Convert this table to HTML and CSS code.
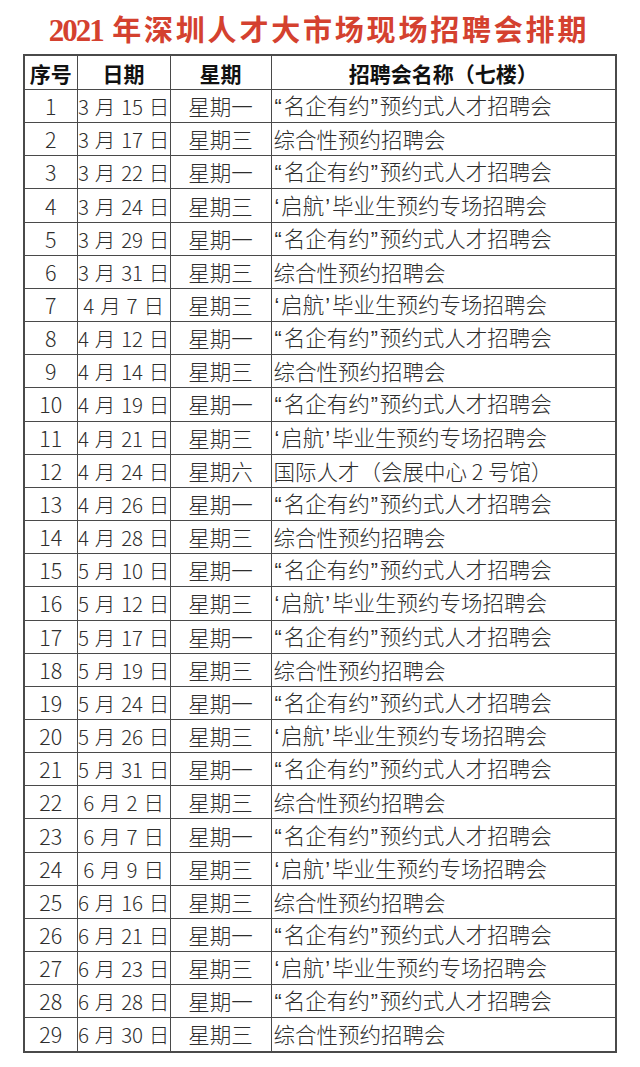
FILE: index.html
```html
<!DOCTYPE html>
<html lang="zh-CN">
<head>
<meta charset="utf-8">
<title>2021年深圳人才大市场现场招聘会排期</title>
<link rel="stylesheet" href="styles.css">
</head>
<body>
<div class="page">
  <h1 class="title"><span class="year">2021</span> 年深圳人才大市场现场招聘会排期</h1>
  <table class="sched">
    <colgroup>
      <col class="c1"><col class="c2"><col class="c3"><col class="c4">
    </colgroup>
    <thead>
      <tr><th>序号</th><th>日期</th><th>星期</th><th>招聘会名称（七楼）</th></tr>
    </thead>
    <tbody>
      <tr><td>1</td><td class="date">3 月 15 日</td><td>星期一</td><td class="name"><span class="q">“</span>名企有约<span class="q">”</span>预约式人才招聘会</td></tr>
      <tr><td>2</td><td class="date">3 月 17 日</td><td>星期三</td><td class="name">综合性预约招聘会</td></tr>
      <tr><td>3</td><td class="date">3 月 22 日</td><td>星期一</td><td class="name"><span class="q">“</span>名企有约<span class="q">”</span>预约式人才招聘会</td></tr>
      <tr><td>4</td><td class="date">3 月 24 日</td><td>星期三</td><td class="name"><span class="q">‘</span>启航<span class="q">’</span>毕业生预约专场招聘会</td></tr>
      <tr><td>5</td><td class="date">3 月 29 日</td><td>星期一</td><td class="name"><span class="q">“</span>名企有约<span class="q">”</span>预约式人才招聘会</td></tr>
      <tr><td>6</td><td class="date">3 月 31 日</td><td>星期三</td><td class="name">综合性预约招聘会</td></tr>
      <tr><td>7</td><td class="date">4 月 7 日</td><td>星期三</td><td class="name"><span class="q">‘</span>启航<span class="q">’</span>毕业生预约专场招聘会</td></tr>
      <tr><td>8</td><td class="date">4 月 12 日</td><td>星期一</td><td class="name"><span class="q">“</span>名企有约<span class="q">”</span>预约式人才招聘会</td></tr>
      <tr><td>9</td><td class="date">4 月 14 日</td><td>星期三</td><td class="name">综合性预约招聘会</td></tr>
      <tr><td>10</td><td class="date">4 月 19 日</td><td>星期一</td><td class="name"><span class="q">“</span>名企有约<span class="q">”</span>预约式人才招聘会</td></tr>
      <tr><td>11</td><td class="date">4 月 21 日</td><td>星期三</td><td class="name"><span class="q">‘</span>启航<span class="q">’</span>毕业生预约专场招聘会</td></tr>
      <tr><td>12</td><td class="date">4 月 24 日</td><td>星期六</td><td class="name">国际人才（会展中心 2 号馆）</td></tr>
      <tr><td>13</td><td class="date">4 月 26 日</td><td>星期一</td><td class="name"><span class="q">“</span>名企有约<span class="q">”</span>预约式人才招聘会</td></tr>
      <tr><td>14</td><td class="date">4 月 28 日</td><td>星期三</td><td class="name">综合性预约招聘会</td></tr>
      <tr><td>15</td><td class="date">5 月 10 日</td><td>星期一</td><td class="name"><span class="q">“</span>名企有约<span class="q">”</span>预约式人才招聘会</td></tr>
      <tr><td>16</td><td class="date">5 月 12 日</td><td>星期三</td><td class="name"><span class="q">‘</span>启航<span class="q">’</span>毕业生预约专场招聘会</td></tr>
      <tr><td>17</td><td class="date">5 月 17 日</td><td>星期一</td><td class="name"><span class="q">“</span>名企有约<span class="q">”</span>预约式人才招聘会</td></tr>
      <tr><td>18</td><td class="date">5 月 19 日</td><td>星期三</td><td class="name">综合性预约招聘会</td></tr>
      <tr><td>19</td><td class="date">5 月 24 日</td><td>星期一</td><td class="name"><span class="q">“</span>名企有约<span class="q">”</span>预约式人才招聘会</td></tr>
      <tr><td>20</td><td class="date">5 月 26 日</td><td>星期三</td><td class="name"><span class="q">‘</span>启航<span class="q">’</span>毕业生预约专场招聘会</td></tr>
      <tr><td>21</td><td class="date">5 月 31 日</td><td>星期一</td><td class="name"><span class="q">“</span>名企有约<span class="q">”</span>预约式人才招聘会</td></tr>
      <tr><td>22</td><td class="date">6 月 2 日</td><td>星期三</td><td class="name">综合性预约招聘会</td></tr>
      <tr><td>23</td><td class="date">6 月 7 日</td><td>星期一</td><td class="name"><span class="q">“</span>名企有约<span class="q">”</span>预约式人才招聘会</td></tr>
      <tr><td>24</td><td class="date">6 月 9 日</td><td>星期三</td><td class="name"><span class="q">‘</span>启航<span class="q">’</span>毕业生预约专场招聘会</td></tr>
      <tr><td>25</td><td class="date">6 月 16 日</td><td>星期三</td><td class="name">综合性预约招聘会</td></tr>
      <tr><td>26</td><td class="date">6 月 21 日</td><td>星期一</td><td class="name"><span class="q">“</span>名企有约<span class="q">”</span>预约式人才招聘会</td></tr>
      <tr><td>27</td><td class="date">6 月 23 日</td><td>星期三</td><td class="name"><span class="q">‘</span>启航<span class="q">’</span>毕业生预约专场招聘会</td></tr>
      <tr><td>28</td><td class="date">6 月 28 日</td><td>星期一</td><td class="name"><span class="q">“</span>名企有约<span class="q">”</span>预约式人才招聘会</td></tr>
      <tr><td>29</td><td class="date">6 月 30 日</td><td>星期三</td><td class="name">综合性预约招聘会</td></tr>
    </tbody>
  </table>
</div>
</body>
</html>
```
FILE: styles.css
```css
html, body {
  margin: 0;
  padding: 0;
  background: #ffffff;
}

.page {
  width: 640px;
  padding: 0 0 0 23px;
  box-sizing: border-box;
}

.title {
  margin: 0;
  height: 54px;
  padding-top: 9px;
  box-sizing: border-box;
  width: 592px;
  text-align: center;
  color: #d4412f;
  font-family: "Noto Sans CJK SC", sans-serif;
  font-weight: 700;
  font-size: 29px;
  line-height: 38px;
  letter-spacing: 2.8px;
  white-space: nowrap;
}

.year {
  font-family: "Liberation Serif", "Noto Sans CJK SC", serif;
  font-weight: 700;
  font-size: 31px;
  letter-spacing: -2px;
}

.sched {
  width: 592px;
  border-collapse: collapse;
  table-layout: fixed;
  border: 2px solid #4a4a4a;
  font-family: "Noto Sans CJK SC", sans-serif;
  font-size: 21.5px;
  color: #2e2e2e;
}

.c1 { width: 53px; }
.c2 { width: 93px; }
.c3 { width: 101px; }
.c4 { width: 345px; }

.sched th,
.sched td {
  border: 1px solid #4a4a4a;
  padding: 0;
  text-align: center;
  white-space: nowrap;
  overflow: hidden;
}

.sched th {
  height: 33px;
  font-size: 21px;
  font-weight: 700;
  color: #111111;
  line-height: 24px;
}

.sched td {
  height: 32.17px;
  font-weight: 300;
  line-height: 24px;
}

.sched td.date {
  font-size: 20.5px;
  word-spacing: 2px;
  letter-spacing: -0.3px;
}

.sched td.name {
  text-align: left;
  padding-left: 2px;
}

.q {
  font-family: "Liberation Sans", sans-serif;
  font-weight: 400;
  letter-spacing: 2px;
  padding-left: 1px;
}
```
